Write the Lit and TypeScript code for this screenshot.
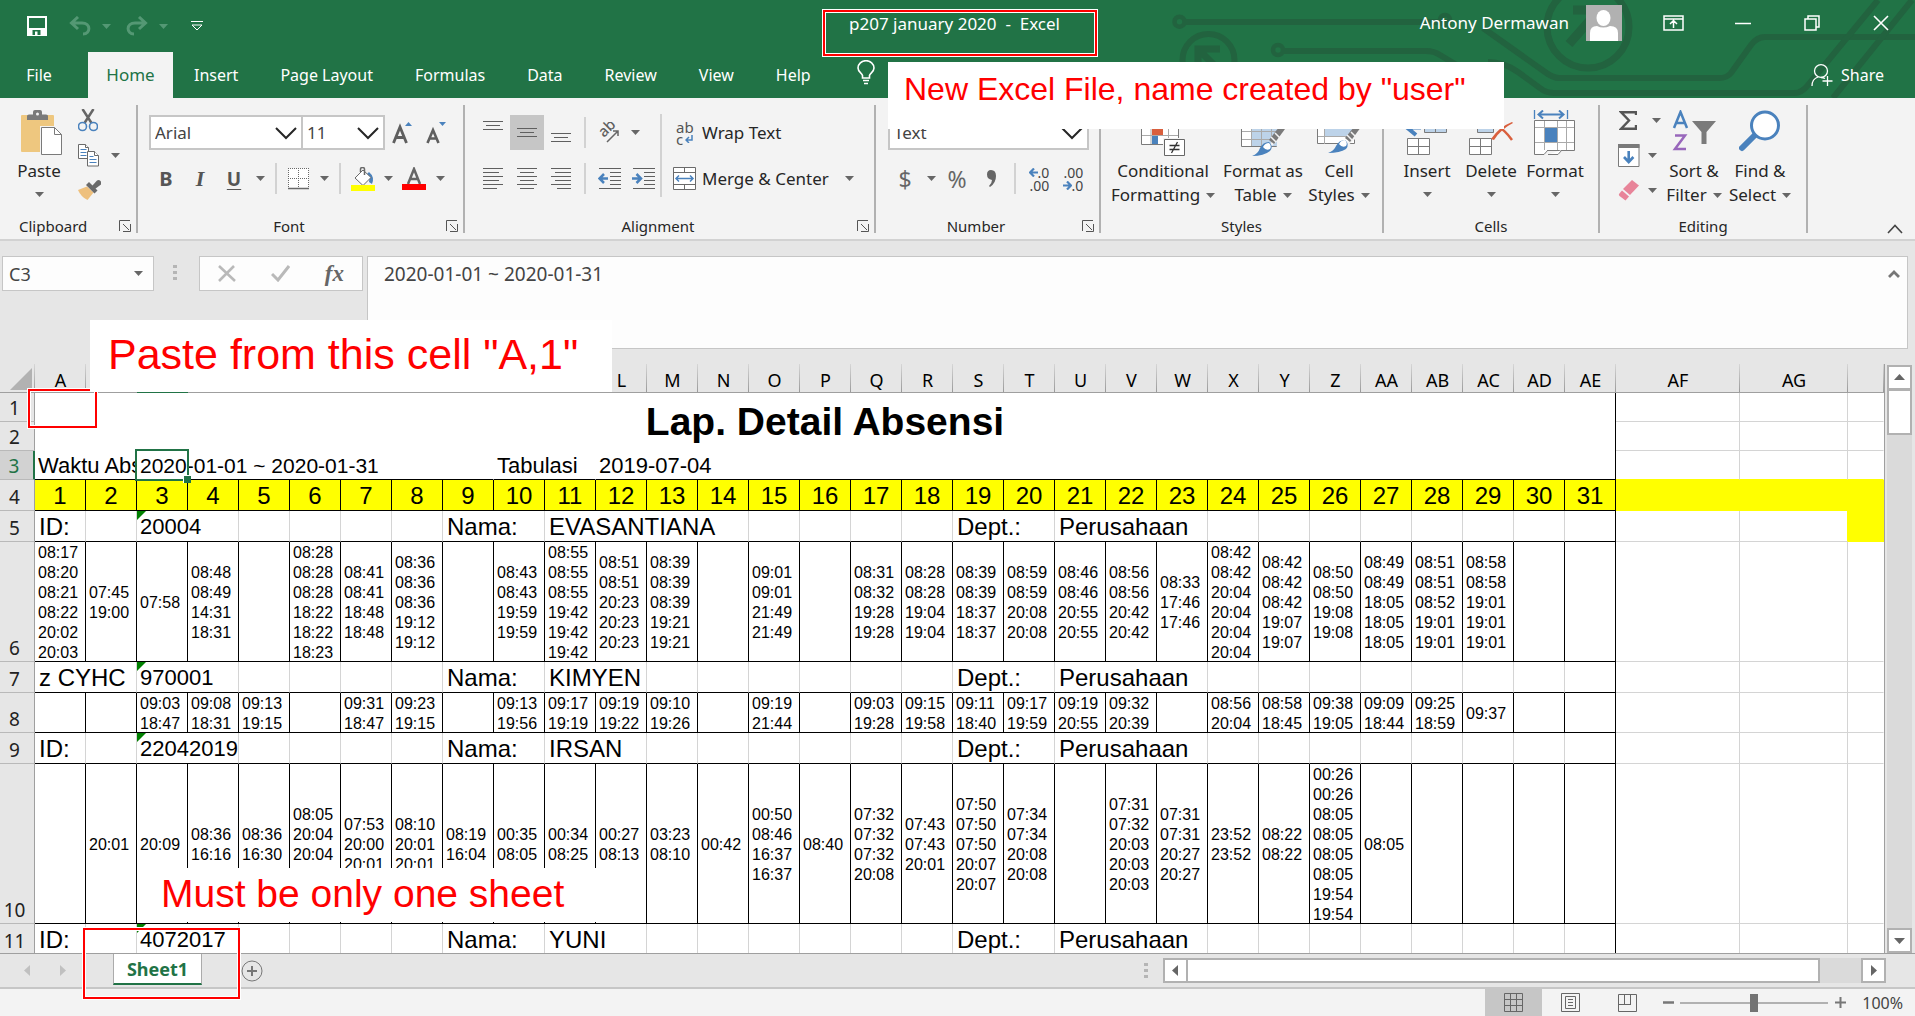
import { LitElement, html, css, svg, nothing, TemplateResult } from "lit";
import { customElement } from "lit/decorators.js";
import { classMap } from "lit/directives/class-map.js";

const caret = html`<svg class="caret" width="9" height="5" viewBox="0 0 9 5" aria-hidden="true"><path d="M0 0h9L4.500 5z" fill="#666"/></svg>`;
const chevron = html`<svg class="chev" width="22" height="13" viewBox="0 0 22 13" aria-hidden="true"><path d="M1 1l10 10L21 1" fill="none" stroke="#262626" stroke-width="2"/></svg>`;
const launcher = html`<svg width="12" height="12" viewBox="0 0 12 12" aria-hidden="true"><path d="M.5 11V.5H11M4 4l6 6M11.500 4v7.500H4" fill="none" stroke="#555"/></svg>`;

const lines = (xs: [number, number][]) => html`
  <svg width="20" height=${xs.length * 4 - 3} viewBox="0 0 20 ${xs.length * 4 - 3}" aria-hidden="true">
    ${xs.map(([a, b], i) => svg`<path d="M${a} ${i * 4 + 0.5}H${b}" stroke="#5f5f5f"/>`)}
  </svg>`;

const threeLines = lines([[0, 20], [3, 17], [0, 20]]);

const icons = {
  save: html`<svg width="20" height="20" viewBox="0 0 20 20"><path d="M1 1h18v18H1z" fill="none" stroke="#fff" stroke-width="2"/><path d="M1 12h18v7H1z" fill="#fff"/><path d="M5.500 14h8v5h-8z" fill="#217346"/><path d="M8 15.500h2.500V19H8z" fill="#fff"/></svg>`,
  undo: html`<svg width="22" height="20" viewBox="0 0 22 20" fill="none" stroke="#549874" stroke-width="3"><path d="M9 1L2.500 7 9 13M3 7h10c9 0 9 11 1 11"/></svg>`,
  redo: html`<svg width="22" height="20" viewBox="0 0 22 20" fill="none" stroke="#549874" stroke-width="3"><path d="M13 1l6.500 6L13 13M19 7H9C0 7 0 18 8 18"/></svg>`,
  custom: html`<svg width="12" height="10" viewBox="0 0 12 10" fill="none" stroke="#fff"><path d="M0 .5h12M1 4l5 5 5-5z"/></svg>`,
  display: html`<svg width="21" height="16" viewBox="0 0 21 16" fill="none" stroke="#fff" stroke-width="1.500"><path d="M1 1h19v14H1zM1 4h19M10.500 13V6M7 9l3.500-3.500L14 9"/></svg>`,
  minimize: html`<svg width="16" height="16" viewBox="0 0 16 16"><path d="M0 8.500h16" stroke="#fff" stroke-width="1.500"/></svg>`,
  restore: html`<svg width="16" height="16" viewBox="0 0 16 16" fill="none" stroke="#fff" stroke-width="1.500"><path d="M1 4h11v11H1zM4 4V1h11v11h-3"/></svg>`,
  close: html`<svg width="16" height="16" viewBox="0 0 16 16"><path d="M1 1l14 14M15 1L1 15" stroke="#fff" stroke-width="1.600"/></svg>`,
  bulb: html`<svg width="18" height="25" viewBox="0 0 18 25" fill="none" stroke="#fff" stroke-width="1.600"><path d="M5.500 18v-2.500C5 13 1 12 1 8a8 7.300 0 0 1 16 0c0 4-4 5-4.500 7.500V18zM6 20.500h6M7 23.500h4"/></svg>`,
  share: html`<svg width="22" height="23" viewBox="0 0 22 23" fill="none" stroke="#fff" stroke-width="1.300"><ellipse cx="10" cy="7" rx="6.500" ry="6.300"/><path d="M1 22c0-5 3-8 6-9M10 13.500c2 0 3 .5 4 1M16.500 12v10M11.500 17h10"/></svg>`,
  paste: html`<svg width="42" height="46" viewBox="0 0 42 46"><rect x="0" y="5" width="33" height="37" rx="1" fill="#eec77f"/><path d="M6 10V6q0-1.500 2-1.500h4V2q0-2 2-2h5q2 0 2 2v2.500h4q2 0 2 1.500v4z" fill="#7a7a7a"/><circle cx="16.500" cy="4" r="1.500" fill="#f3f3f3"/><path d="M19 16h15l8 8v22H19z" fill="#f3f3f3"/><path d="M20.500 17.500h13l7 7V44.500h-20z" fill="#fff" stroke="#7a7a7a"/><path d="M33.500 17.500v7h7" fill="none" stroke="#7a7a7a"/></svg>`,
  cut: html`<svg width="20" height="23" viewBox="0 0 20 23"><path d="M4.500 0l9 14M15.500 0l-9 14" stroke="#666" stroke-width="2.500"/><circle cx="4.500" cy="17.500" r="4" fill="#f3f3f3" stroke="#4a82bd" stroke-width="1.600"/><circle cx="15.500" cy="17.500" r="4" fill="#f3f3f3" stroke="#4a82bd" stroke-width="1.600"/></svg>`,
  copy: html`<svg width="21" height="23" viewBox="0 0 21 23" fill="#fff" stroke="#6a6a6a"><path d="M.5.5h7l3 3v11H.5z"/><path d="M7.500.5v3h3" /><path d="M2.500 5.500h6M2.500 8.500h6M2.500 11.500h6" stroke="#4a82bd"/><path d="M9.500 7.500h7l4 4v10.500h-11z"/><path d="M16.500 7.500v4h4"/><path d="M11.500 12.500h4M11.500 15.500h7M11.500 18.500h7" stroke="#4a82bd"/></svg>`,
  brush: html`<svg width="23" height="21" viewBox="0 0 23 21"><path d="M0 10l9-3.500 6.500 6L9.500 20Q3 17 0 10z" fill="#eec07d"/><path d="M8 5l3-3 8.500 8.500-3 3z" fill="#6a6a6a"/><path d="M14 6l5-5.500q2-1 3.500.5t.5 3.500L17 9z" fill="#6a6a6a"/></svg>`,
  border: html`<svg width="22" height="22" viewBox="0 0 22 22" fill="#fff" stroke="#6a6a6a"><path d="M.5.500h20.500v20H.5z" stroke="none"/><path d="M0 .5h21M0 10.500h21M.5 0v20M10.500 0v20M20.500 0v20" stroke-dasharray="1 1"/><path d="M0 20.500h21" stroke-width="1.500"/></svg>`,
  bucket: html`<svg width="24" height="24" viewBox="0 0 24 24"><path d="M18 5q6 5 3 12l-3-2q1-4-2-8z" fill="#4a82bd"/><path d="M4 11l8-8 8 7.500-8 8z" fill="#fff" stroke="#6a6a6a"/><path d="M9.500 5V2q0-1.500 2-1.500T13.500 2v6" fill="none" stroke="#6a6a6a" stroke-width="1.500"/><path d="M0 18h24v6H0z" fill="#ff0"/></svg>`,
  fontColor: html`<svg width="24" height="23" viewBox="0 0 24 23"><path d="M6 17L12 2l6 15M8 12h8" fill="none" stroke="#666" stroke-width="2.500"/><path d="M0 17h24v6H0z" fill="red"/></svg>`,
  grow: html`<svg width="20" height="22" viewBox="0 0 20 22"><path d="M1.500 21L8 5l6.500 16M4 15.500h8" fill="none" stroke="#5f5f5f" stroke-width="2.800"/><path d="M13 4l3.500-4L20 4z" fill="#4a82bd"/></svg>`,
  shrink: html`<svg width="20" height="22" viewBox="0 0 20 22"><path d="M1.500 21L7 8l5.500 13M3.500 16.500h7" fill="none" stroke="#5f5f5f" stroke-width="2.600"/><path d="M13 0h7l-3.500 4z" fill="#4a82bd"/></svg>`,
  orient: html`<svg width="22" height="22" viewBox="0 0 22 22"><text x="0" y="0" transform="translate(6 16) rotate(-45)" font-family="Noto Sans" font-size="15" font-weight="500" fill="#5f5f5f">ab</text><path d="M9 20L19.500 9.500M15 9h5v5" fill="none" stroke="#666" stroke-width="1.500"/></svg>`,
  outdent: html`<svg width="23" height="21" viewBox="0 0 23 21" fill="none" stroke="#5f5f5f"><path d="M1 .5h22M12 4.500h11M12 8.500h11M12 12.500h11M12 16.500h11M1 20.500h22"/><path d="M6 6l-4.500 4.500L6 15M2 10.500h8" stroke="#4a82bd" stroke-width="2.500"/></svg>`,
  indent: html`<svg width="23" height="21" viewBox="0 0 23 21" fill="none" stroke="#5f5f5f"><path d="M1 .5h22M12 4.500h11M12 8.500h11M12 12.500h11M12 16.500h11M1 20.500h22"/><path d="M4.500 6L9 10.500 4.500 15M0 10.500h8" stroke="#4a82bd" stroke-width="2.500"/></svg>`,
  merge: html`<svg width="23" height="23" viewBox="0 0 23 23"><path d="M.5.500h22v22H.5z" fill="#fff" stroke="#6a6a6a"/><path d="M0 5.500h23M0 17.500h23M11.500 0v5M11.500 18v5" stroke="#6a6a6a"/><path d="M3 11.500h17M6 8.500l-3 3 3 3M17 8.500l3 3-3 3" fill="none" stroke="#4a82bd" stroke-width="1.500"/></svg>`,
  wrapArrow: html`<svg width="8" height="8" viewBox="0 0 8 8"><path d="M7 0v5H1M4 2L1 5l3 3" fill="none" stroke="#4a82bd" stroke-width="1.500"/></svg>`,
  left: html`<svg width="9" height="9" viewBox="0 0 9 9"><path d="M9 4.500H1M5 .5l-4 4 4 4" fill="none" stroke="#4a82bd" stroke-width="2.200"/></svg>`,
  right: html`<svg width="9" height="9" viewBox="0 0 9 9"><path d="M0 4.500h8M4 .5l4 4-4 4" fill="none" stroke="#4a82bd" stroke-width="2.200"/></svg>`,
  cond: html`<svg width="44" height="46" viewBox="0 0 44 46"><path d="M.5 5.500h37v29H.5z" fill="#fff" stroke="#7a7a7a"/><path d="M10 6v28M27.500 6v28M1 15.500h36M1 25.500h36" stroke="#aaa" fill="none"/><path d="M11 6h16v9H11z" fill="#4a82bd"/><path d="M11 16h11v9H11z" fill="#d95f3d"/><path d="M11 26h6v8h-6z" fill="#4a82bd"/><path d="M22 28h22v18H22z" fill="#f3f3f3"/><path d="M23.500 29.500h20v16h-20z" fill="#fff" stroke="#666"/><path d="M28.500 35.500h10M28.500 39.500h10M36.500 32l-6 11" stroke="#333" stroke-width="1.300"/></svg>`,
  table: html`<svg width="44" height="46" viewBox="0 0 44 46"><path d="M.5 5.500h35v31H.5z" fill="#fff" stroke="#7a7a7a"/><path d="M11 15h25v21H11z" fill="#bdd3e9"/><path d="M10.500 6v30M20.500 6v30M30.500 6v30M1 14.500h34M1 21.500h34M1 29.500h34" stroke="#aaa"/><path d="M20 46L46 12v10z" fill="#f3f3f3"/><path d="M28 30l13-17 3-2v8L33 34z" fill="#7a7a7a"/><path d="M34 23l5 5M30 27l5 5" stroke="#f3f3f3" stroke-width="1.500"/><path d="M11 46q6-2 8-8 3-6 9-6 5 4 1 9-6 5-18 5z" fill="#4a82bd"/><path d="M22 37q2-4 6-4 3 3 1 6-4 2-7-2z" fill="#fff"/></svg>`,
  cell: html`<svg width="44" height="46" viewBox="0 0 44 46"><path d="M.5 5.500h37v28H.5z" fill="#fff" stroke="#7a7a7a"/><path d="M8 12h29v14H8z" fill="#bdd3e9"/><path d="M7.500 6v28M1 26.500h36M1 12.500h36" stroke="#aaa"/><path d="M19 46L46 12v10z" fill="#f3f3f3"/><path d="M28 28l13-16 3-2v7L33 32z" fill="#7a7a7a"/><path d="M34 22l5 5M30 25l5 5" stroke="#f3f3f3" stroke-width="1.500"/><path d="M11 43q6-2 8-7 3-6 9-6 5 4 1 9-6 4-18 4z" fill="#4a82bd"/><path d="M22 34q2-4 6-4 3 3 1 6-4 2-7-2z" fill="#fff"/></svg>`,
  insert: html`<svg width="44" height="46" viewBox="0 0 44 46"><path d="M11 9L2 17.500 11 25M2 17.500h14" fill="none" stroke="#4a82bd" stroke-width="4"/><path d="M19.500 10.500h22v12h-22z" fill="#bdd3e9" stroke="#7a7a7a"/><path d="M30.500 10v12M20 16.500h22" stroke="#7a7a7a"/><path d="M2.500 28.500h22v16h-22z" fill="#fff" stroke="#7a7a7a"/><path d="M13.500 28v16M2 36.500h22" stroke="#7a7a7a"/></svg>`,
  del: html`<svg width="44" height="46" viewBox="0 0 44 46"><path d="M8.500 10.500h16v12h-16z" fill="#bdd3e9" stroke="#7a7a7a"/><path d="M.5 28.500h22v16H.5z" fill="#fff" stroke="#7a7a7a"/><path d="M11.500 28v16M0 36.500h22" stroke="#7a7a7a"/><path d="M22 29q8-12 21-17l1 1Q32 19 25 30z" fill="#d95f3d"/><path d="M26 14q10 6 17 16" fill="none" stroke="#d95f3d" stroke-width="2.500"/></svg>`,
  format: html`<svg width="44" height="46" viewBox="0 0 44 46"><path d="M1.500 0v9M34.500 0v9" stroke="#4a82bd" stroke-width="1.300"/><path d="M6 4.500h24M10 .5l-4.500 4L10 8.500M26 .5l4.500 4-4.500 4" fill="none" stroke="#4a82bd" stroke-width="2"/><path d="M1.500 10.500h40v30h-40z" fill="#fff" stroke="#7a7a7a"/><path d="M11.500 11v29M24.500 11v29M33.500 11v29M2 17.500h39M2 32.500h39" stroke="#aaa"/><path d="M12 18h12v14H12z" fill="#4a82bd"/><path d="M1.500 40v4.500H11l4-4.500M15 44.500h10l4-4.500" fill="#fff" stroke="#7a7a7a"/></svg>`,
  sigma: html`<svg class="sigma" width="18" height="19" viewBox="0 0 18 19"><path d="M17 4V1.200H2L10 9.500 2 17.800h15V14" fill="none" stroke="#555" stroke-width="2.400"/></svg>`,
  fill: html`<svg width="22" height="23" viewBox="0 0 22 23"><path d="M.5.500h20.500v22H.5z" fill="#fff" stroke="#7a7a7a"/><path d="M0 0h21.500v4H0z" fill="#7a7a7a"/><path d="M10.700 7v11M6 13l4.700 5 4.700-5" fill="none" stroke="#4a82bd" stroke-width="2.600"/></svg>`,
  eraser: html`<svg width="22" height="21" viewBox="0 0 22 21"><path d="M14 0l7 5.500L12 15 5 9z" fill="#e88499"/><path d="M4 10.500l7 6-3.500 4-6-4.500q-1-1-.5-2z" fill="#e88499"/></svg>`,
  sort: html`<svg width="44" height="46" viewBox="0 0 44 46"><path d="M2 18L8.500 2 15 18M4.500 13h8" fill="none" stroke="#4a82bd" stroke-width="2.500"/><path d="M3 25.500h10L3 39h11" fill="none" stroke="#9867bb" stroke-width="2.500"/><path d="M20 11h24L34.500 22v12h-5V22z" fill="#7a7a7a"/></svg>`,
  find: html`<svg width="42" height="42" viewBox="0 0 42 42"><path d="M17 24L3 38" stroke="#4a82bd" stroke-width="6" stroke-linecap="round"/><circle cx="26" cy="15.500" r="13.500" fill="#fff" stroke="#4a82bd" stroke-width="3"/></svg>`,
  x: html`<svg width="18" height="17" viewBox="0 0 18 17"><path d="M1 1l16 15M16 1L1 16" stroke="#b9b9b9" stroke-width="2.600"/></svg>`,
  check: html`<svg width="19" height="17" viewBox="0 0 19 17"><path d="M1 9l6 6L18 1" fill="none" stroke="#b9b9b9" stroke-width="3"/></svg>`,
  normal: html`<svg width="19" height="19" viewBox="0 0 19 19" fill="none" stroke="#666"><path d="M.5.500h18v18H.5zM6.500 0v19M12.500 0v19M0 6.500h19M0 12.500h19"/></svg>`,
  page: html`<svg width="19" height="19" viewBox="0 0 19 19" fill="none" stroke="#666"><path d="M.5.500h18v18H.5zM4.500 3.500h10v12h-10zM7 6.500h5M7 9.500h5M7 12.500h5"/></svg>`,
  brk: html`<svg width="19" height="18" viewBox="0 0 19 18" fill="none" stroke="#666"><path d="M.5.500h18v17H.5zM6.500 0v10.500M12.500 0v10.500M0 10.500h13"/></svg>`,
};

const tri = (d: string) => html`<svg width="11" height="11" viewBox="0 0 11 11" aria-hidden="true"><path d=${d} fill="currentColor"/></svg>`;
const UP = "M0 8h11L5.500 2z", DOWN = "M0 3h11L5.500 9z", LEFT = "M8 0v11L2 5.500z", RIGHT = "M3 0v11L9 5.500z";

const COLS = [..."ABCDEFGHIJKLMNOPQRSTUVWXYZ", "AA", "AB", "AC", "AD", "AE", "AF", "AG", ""];

const times = (s: string) => s.split("|").map((c) => c.trim().replace(/ /g, "\n"));

const R6 = times("08:17 08:20 08:21 08:22 20:02 20:03|07:45 19:00|07:58|08:48 08:49 14:31 18:31||08:28 08:28 08:28 18:22 18:22 18:23|08:41 08:41 18:48 18:48|08:36 08:36 08:36 19:12 19:12||08:43 08:43 19:59 19:59|08:55 08:55 08:55 19:42 19:42 19:42|08:51 08:51 20:23 20:23 20:23|08:39 08:39 08:39 19:21 19:21||09:01 09:01 21:49 21:49||08:31 08:32 19:28 19:28|08:28 08:28 19:04 19:04|08:39 08:39 18:37 18:37|08:59 08:59 20:08 20:08|08:46 08:46 20:55 20:55|08:56 08:56 20:42 20:42|08:33 17:46 17:46|08:42 08:42 20:04 20:04 20:04 20:04|08:42 08:42 08:42 19:07 19:07|08:50 08:50 19:08 19:08|08:49 08:49 18:05 18:05 18:05|08:51 08:51 08:52 19:01 19:01|08:58 08:58 19:01 19:01 19:01||");
const R8 = times("||09:03 18:47|09:08 18:31|09:13 19:15||09:31 18:47|09:23 19:15||09:13 19:56|09:17 19:19|09:19 19:22|09:10 19:26||09:19 21:44||09:03 19:28|09:15 19:58|09:11 18:40|09:17 19:59|09:19 20:55|09:32 20:39||08:56 20:04|08:58 18:45|09:38 19:05|09:09 18:44|09:25 18:59|09:37||");
const R10 = times("|20:01|20:09|08:36 16:16|08:36 16:30|08:05 20:04 20:04 20:04|07:53 20:00 20:01|08:10 20:01 20:01|08:19 16:04|00:35 08:05|00:34 08:25|00:27 08:13|03:23 08:10|00:42|00:50 08:46 16:37 16:37|08:40|07:32 07:32 07:32 20:08|07:43 07:43 20:01|07:50 07:50 07:50 20:07 20:07|07:34 07:34 20:08 20:08||07:31 07:32 20:03 20:03 20:03|07:31 07:31 20:27 20:27|23:52 23:52|08:22 08:22|00:26 00:26 08:05 08:05 08:05 08:05 19:54 19:54|08:05||||");

@customElement("app-root")
export class AppRoot extends LitElement {
  static styles = css`
    :host { display: flex; flex-direction: column; position: relative; height: 100vh; overflow: hidden; background: #e6e6e6; color: #262626; font: 16px/24px "Noto Sans", "Open Sans", sans-serif; }
    * { box-sizing: border-box; }
    svg { display: block; flex: none; }
    button { font: inherit; color: inherit; background: none; border: 0; padding: 0; margin: 0; display: flex; align-items: center; justify-content: center; white-space: nowrap; }
    .head { position: relative; flex: none; background: #217346; color: #fff; }
    .circuit { position: absolute; right: 0; top: 0; }
    .title { position: relative; display: grid; grid-template-columns: 1fr auto 1fr; align-items: center; height: 46px; font-size: 17px; }
    .quick { display: flex; align-items: center; padding: 6px 0 0 27px; }
    .quick .caret path { fill: #549874; }
    .undo { margin-left: 22px; } .quick .caret { margin: 0 15px 0 11px; }
    .quick .custom { margin-left: 8px; }
    .docname { white-space: pre; padding-top: 2px; margin-right: 6px; }
    .who { display: flex; align-items: center; justify-content: flex-end; }
    .avatar { margin: 0 17px; }
    .who button { width: 69px; height: 46px; }
    .tabs { position: relative; display: flex; align-items: stretch; height: 46px; margin-top: 6px; }
    .tab { padding: 0 21px; color: #fff; }
    .tab.file { width: 88px; padding: 0 10px 0 0; }
    .tab.on { background: #f3f3f3; color: #217346; width: 85px; font-size: 17px; padding: 0; }
    .bulb { margin: 0 0 6px 25px; }
    .share { margin-left: auto; padding-right: 31px; gap: 8px; }
    .ribbon { flex: none; display: flex; background: #f3f3f3; border-bottom: 2px solid #d2d2d2; height: 143px; padding-top: 7px; font-size: 17px; }
    .group { display: flex; flex-direction: column; border-right: 2px solid #b1b1b1; margin-bottom: 6px; }
    .body { flex: 1; display: flex; }
    .foot { display: flex; height: 27px; align-items: center; font-size: 15px; margin-bottom: -6px; }
    .foot span { flex: 1; text-align: center; padding-right: 6px; }
    .foot button { width: 12px; margin-right: 5px; }
    .foot.plain span { padding-right: 0; }
    .clip .foot span { text-align: left; padding-left: 19px; }
    .clip { width: 138px; } .font { width: 327px; } .align { width: 411px; } .number { width: 225px; } .styles { width: 283px; } .cells { width: 216px; } .edit { width: 208px; }
    .big { flex-direction: column; justify-content: flex-start; padding-top: 5px; line-height: 24px; }
    .big .ico { height: 49px; }
    .big .caret { margin-top: 9px; }
    .big .line { display: flex; align-items: center; gap: 6px; }
    .big .line .caret { margin: 0; }
    .w-cond { width: 124px; } .w-style { width: 76px; } .w-paste { width: 78px; } .w-side { width: 86px; } .w-del { width: 42px; } .w-edit { width: 66px; }
    .w-paste .ico { padding-left: 6px; }
    .minis { display: flex; flex-direction: column; margin-top: -2px; }
    .mini { height: 35px; display: flex; align-items: center; gap: 12px; }
    .edit .minis { padding-left: 18px; } .edit .mini { gap: 8px; } .sigma { margin: 0 7px 0 1px; }
    .rows { display: flex; flex-direction: column; padding: 10px 0 0 11px; gap: 11px; }
    .row { display: flex; align-items: center; height: 35px; }
    .t { width: 34px; height: 35px; } .i { width: 32px; height: 35px; } .a { width: 18px; height: 35px; }
    .t.sel { background: #c6c6c6; }
    .sep { width: 2px; height: 31px; background: #d2d2d2; margin: 0 6px; }
    .tall { width: 2px; height: 83px; background: #d2d2d2; margin-top: 9px; }
    .combo { position: relative; height: 35px; border: 2px solid #c6c6c6; background: #fff; }
    .combo select { appearance: none; width: 100%; height: 100%; border: 0; background: none; padding: 0 4px; font: inherit; color: #444; }
    .combo .chev { position: absolute; right: 4px; top: 10px; pointer-events: none; }
    .c1 { width: 154px; } .c2 { width: 84px; margin-left: -2px; } .c3 { width: 201px; }
    .b { font-size: 20px; font-weight: 700; color: #555; }
    .it { font: italic 700 22px "Liberation Serif", serif; color: #555; }
    .u { font-size: 19px; font-weight: 700; color: #555; text-decoration: underline; text-underline-offset: 3px; text-decoration-thickness: 1px; }
    .sym { font-size: 23px; color: #666; }
    .number .rows { padding-left: 12px; }
    .dec { display: flex; flex-direction: column; align-items: flex-start; font-size: 14px; line-height: 13px; color: #444; }
    .dec span { display: flex; align-items: center; } .dec .end { align-self: flex-end; }
    .vtop { align-items: flex-start; padding-top: 6px; } .vbot { align-items: flex-end; padding-bottom: 8px; }
    .right { display: flex; flex-direction: column; gap: 11px; padding: 10px 0 0 11px; }
    .right button { height: 35px; justify-content: flex-start; }
    .lead { width: 23px; margin-right: 6px; }
    .wrapi { font-size: 15px; line-height: 12px; color: #555; text-align: left; padding-left: 3px; }
    .wrapi span { display: flex; align-items: center; gap: 2px; }
    .right .caret { margin-left: 16px; }
    .collapse { margin: auto 12px 5px auto; }
    .formula { flex: none; display: flex; align-items: flex-start; height: 123px; padding: 15px 7px 0 2px; font-size: 18px; color: #444; }
    .box { background: #fdfdfd; border: 1px solid #c6c6c6; height: 35px; display: flex; align-items: center; }
    .box input, .fx textarea { border: 0; background: none; font: inherit; color: inherit; padding: 0; min-width: 0; outline: 0; resize: none; }
    .name { width: 152px; padding: 0 10px 0 6px; } .name input { flex: 1; }
    .dots { width: 4px; height: 16px; background: repeating-linear-gradient(#b5b5b5 0 3px, transparent 3px 6px); }
    .formula .dots { margin: 9px 22px 0 19px; }
    .fns { width: 164px; justify-content: space-between; padding: 0 18px; margin-right: 4px; }
    .fn { font: italic 700 23px "Liberation Serif", serif; color: #666; }
    .fx { flex: 1; height: 93px; align-items: flex-start; padding: 4px 7px 0 16px; font-size: 19px; }
    .fx textarea { flex: 1; height: 82px; line-height: 26px; }
    .fx button { margin-top: 9px; }
    .sheet { flex: 1; min-height: 0; display: flex; border-bottom: 1px solid #9f9f9f; }
    .grid { flex: 1; min-width: 0; overflow: hidden; border-right: 1px solid #9f9f9f; background: linear-gradient(#e6e6e6 28px, #fff 28px); }
    table { width: 100%; table-layout: fixed; border-collapse: separate; border-spacing: 0; font: 24px/28px "Liberation Sans", Arial, sans-serif; color: #000; }
    .w0 { width: 35px; } .w1 { width: 51px; } .w2 { width: 124px; } .w3 { width: 108px; }
    th, td { padding: 0; border-right: 1px solid #d4d4d4; border-bottom: 1px solid #d4d4d4; }
    thead th { height: 29px; background: #e6e6e6 linear-gradient(#d6d6d6, #9a9a9a) right / 1px 100% no-repeat; border-right: 0; border-bottom: 1px solid #9f9f9f; font: 18px/20px "Noto Sans", sans-serif; vertical-align: bottom; padding-bottom: 2px; }
    thead th.cur { background-color: #d2d2d2; color: #217346; border-bottom: 2px solid #217346; }
    .corner svg { margin-left: 10px; }
    tbody th { background: #e6e6e6; border-right-color: #9f9f9f; border-bottom-color: #b9b9b9; font: 19px/22px "Noto Sans", sans-serif; vertical-align: bottom; padding: 0 5px 2px 0; color: #222; }
    tbody th.cur { background: #d2d2d2; color: #217346; border-right: 2px solid #217346; }
    .r29 { height: 29px; } .r31 { height: 31px; }
    .k { border-bottom-color: #000; } .kr { border-right-color: #000; }
    .y { background: #ff0; } td.yb { border-bottom-color: #ff0; } td.yr { border-right-color: #ff0; }
    .none { border-right-color: transparent; }
    .big-title { font-size: 39px; font-weight: 700; text-align: center; border-bottom: 0; }
    .txt { padding: 2px 0 0 4px; white-space: nowrap; position: relative; }
    .num { font-size: 22px; padding-left: 3px; } .sub { font-size: 21px; padding-left: 3px; } .mid { text-align: center; padding-top: 2px; }
    .txt, .mid { line-height: 26px; }
    .clipd { overflow: hidden; height: 26px; width: 98px; }
    .err::before { content: ""; position: absolute; left: 0; top: 0; border-top: 9px solid green; border-right: 9px solid transparent; }
    .cellsel { position: absolute; left: -2px; top: -2px; width: 54px; height: 32px; border: 2px solid #217346; }
    .cellsel::after { content: ""; position: absolute; right: -4px; bottom: -4px; width: 7px; height: 7px; background: #217346; border: solid #fff; border-width: 1px 0 0 1px; }
    .tm { display: flex; align-items: center; overflow: hidden; white-space: pre; font-size: 16px; line-height: 20px; padding: 2px 0 0 3px; }
    .h120 { height: 119px; } .h40 { height: 39px; } .h160 { height: 159px; }
    .vs { width: 30px; padding: 1px 3px 0 2px; display: flex; flex-direction: column; color: #666; }
    .sb { width: 25px; height: 25px; border: 2px solid #b1b1b1; background: #fff; flex: none; }
    .vt { height: 46px; margin-top: -1px; border: 2px solid #b1b1b1; background: #fff; } .track { flex: 1; background: #dadada; }
    .bar { flex: none; height: 33px; display: flex; align-items: center; color: #666; }
    .nav { width: 113px; display: flex; gap: 24px; padding-left: 22px; color: #c0c0c0; }
    .stab { align-self: stretch; margin-bottom: 2px; width: 89px; background: #fff; color: #217346; font-weight: 700; font-size: 18px; border: solid #ababab; border-width: 0 1px; border-bottom: 2px solid #217346; }
    .plus { margin-left: 39px; }
    .hs { margin: 0 29px 0 auto; width: 742px; display: flex; align-items: center; }
    .hs .dots { margin-right: 15px; }
    .ht { flex: 1; height: 25px; margin-left: -2px; border: 2px solid #b1b1b1; background: #fff; } .hgap { width: 41px; height: 25px; background: #dadada; }
    .status { flex: none; height: 29px; border-top: 2px solid #c6c6c6; background: #f3f3f3; display: flex; align-items: center; justify-content: flex-end; padding-right: 12px; color: #444; }
    .view { width: 57px; height: 27px; } .view.sel { background: #c6c6c6; }
    .zb { width: 11px; margin: 0 6px 0 7px; }
    input[type="range"] { appearance: none; width: 148px; height: 18px; margin: 0; background: linear-gradient(#b1b1b1, #b1b1b1) center / 100% 2px no-repeat; }
    input[type="range"]::-webkit-slider-thumb { appearance: none; width: 8px; height: 18px; background: #737373; border: 0; border-radius: 0; }
    .pct { margin-left: 10px; }
    .note { position: absolute; background: #fff; color: red; font-family: "Liberation Sans", Arial, sans-serif; white-space: nowrap; }
    .n1 { left: 888px; top: 62px; width: 616px; height: 67px; padding-left: 16px; font-size: 32px; line-height: 54px; }
    .n2 { left: 90px; top: 320px; width: 522px; height: 72px; padding-left: 18px; font-size: 43px; line-height: 69px; }
    .n3 { left: 137px; top: 868px; width: 503px; height: 54px; padding-left: 24px; font-size: 39px; line-height: 52px; }
    .mark { position: absolute; border: 2px solid red; box-shadow: 0 0 0 1px #fff, inset 0 0 0 1px #fff; pointer-events: none; }
    .m1 { left: 823px; top: 10px; width: 274px; height: 46px; }
    .m2 { left: 28px; top: 389px; width: 69px; height: 39px; }
    .m3 { left: 83px; top: 928px; width: 157px; height: 71px; }
  `;

  private tool(label: string, icon: unknown, cls = "t") {
    return html`<button class=${cls} aria-label=${label}>${icon}</button>`;
  }
  private drop(label: string) {
    return html`<button class="a" aria-label="${label} options">${caret}</button>`;
  }
  private foot(label: string, more = true) {
    return html`<div class="foot ${more ? "" : "plain"}"><span>${label}</span>${more ? html`<button aria-label="${label} settings">${launcher}</button>` : nothing}</div>`;
  }
  private big(icon: unknown, l1: string, l2: string, width: string) {
    return html`<button class="big ${width}"><div class="ico">${icon}</div><div>${l1}</div>${l2 ? html`<div class="line">${l2} ${caret}</div>` : caret}</button>`;
  }

  private circuit() {
    return html`<svg class="circuit" width="750" height="98" viewBox="0 0 750 98" fill="none" stroke="#22633f" stroke-width="6" aria-hidden="true">
      <circle cx="14.500" cy="21.700" r="5" stroke-width="4.500"/><path d="M20 22h266M318 28l62 44q8 6 14 6h160q8 0 12-5l20-28q6-8 14-8h150"/>
      <circle cx="280" cy="20" r="5" stroke-width="4.500"/>
      <circle cx="113" cy="50" r="5" stroke-width="4.500"/><path d="M119 51h142q8 0 14 4l40 24M323 62q16 0 30 10l22 16q6 5 14 5h240q8 0 14-8L713 0M668 98L747 0"/>
      <circle cx="423" cy="27" r="41" stroke-width="7"/><path d="M408 10h26v26M434 10l-30 34" stroke-width="9"/>
      <circle cx="43.500" cy="60" r="26"/><path d="M33 74V49h22M34 50l24 24" stroke-width="7"/>
    </svg>`;
  }

  private outer(row: number) {
    const yel = row === 4;
    return [0, 1, 2].map((i) => html`<td class=${classMap({
      y: yel || (row === 5 && i === 2),
      yr: yel || (row === 5 && i === 1),
      yb: row === 3 || yel || (row === 5 && i === 2),
      none: i === 2,
    })}></td>`);
  }

  private idRow(n: number, a: string, id: string, name: string, span: number) {
    const e = (k: number) => Array.from({ length: k }, () => html`<td class="k"></td>`);
    const wide = a.length > 4;
    return html`<tr class="r31"><th scope="row">${n}</th>
      <td class="k txt" colspan=${wide ? 2 : 1}>${a}</td>${wide ? nothing : e(1)}
      <td class="k txt num err" colspan="2">${id}</td>${e(4)}
      <td class="k txt" colspan="2">Nama:</td>
      <td class="k txt" colspan=${span}>${name}</td>${e(8 - span)}
      <td class="k txt" colspan="2">Dept.:</td>
      <td class="k txt" colspan="3">Perusahaan</td>${e(7)}<td class="k kr"></td>
      ${this.outer(n)}</tr>`;
  }

  private timeRow(n: number, data: string[], h: string) {
    return html`<tr><th scope="row">${n}</th>${data.map((d) => html`<td class="k kr"><div class="tm ${h}">${d}</div></td>`)}${this.outer(n)}</tr>`;
  }

  private table(): TemplateResult {
    return html`<table>
      <colgroup><col class="w0">${COLS.slice(0, 31).map(() => html`<col class="w1">`)}<col class="w2"><col class="w3"><col></colgroup>
      <thead><tr><th class="corner"><svg width="22" height="22" viewBox="0 0 22 22"><path d="M22 0v22H0z" fill="#b2b2b2"/></svg></th>
        ${COLS.map((c) => html`<th scope="col" class=${c === "C" ? "cur" : ""}>${c}</th>`)}</tr></thead>
      <tbody>
        <tr class="r29"><th scope="row">1</th><td class="big-title kr" colspan="31" rowspan="2">Lap. Detail Absensi</td>${this.outer(1)}</tr>
        <tr class="r29"><th scope="row">2</th>${this.outer(2)}</tr>
        <tr class="r29"><th scope="row" class="cur">3</th>
          <td class="k none txt num" colspan="2"><div class="clipd">Waktu Absensi</div></td>
          <td class="k none txt sub" colspan="7">2020-01-01 ~ 2020-01-31<div class="cellsel"></div></td>
          <td class="k none txt num" colspan="2">Tabulasi</td>
          <td class="k kr txt num" colspan="20">2019-07-04</td>${this.outer(3)}</tr>
        <tr class="r31"><th scope="row">4</th>${Array.from({ length: 31 }, (_, i) => html`<td class="y k kr mid">${i + 1}</td>`)}${this.outer(4)}</tr>
        ${this.idRow(5, "ID:", "20004", "EVASANTIANA", 4)}
        ${this.timeRow(6, R6, "h120")}
        ${this.idRow(7, "z CYHC", "970001", "KIMYEN", 2)}
        ${this.timeRow(8, R8, "h40")}
        ${this.idRow(9, "ID:", "22042019", "IRSAN", 2)}
        ${this.timeRow(10, R10, "h160")}
        ${this.idRow(11, "ID:", "4072017", "YUNI", 2)}
      </tbody></table>`;
  }

  render() {
    return html`
      <header class="head">
        ${this.circuit()}
        <div class="title">
          <div class="quick">
            <button aria-label="Save">${icons.save}</button>
            <button class="undo" aria-label="Undo">${icons.undo}${caret}</button>
            <button aria-label="Redo">${icons.redo}${caret}</button>
            <button class="custom" aria-label="Customize toolbar">${icons.custom}</button>
          </div>
          <div class="docname">p207 january 2020  -  Excel</div>
          <div class="who"><span>Antony Dermawan</span>
            <svg class="avatar" width="36" height="36" viewBox="0 0 36 36"><path d="M0 0h36v36H0z" fill="#b1b1b1"/><ellipse cx="17.500" cy="13" rx="7" ry="8" fill="#fff"/><path d="M4 36V28q0-7 7-7 6 3 13 0 8 0 8 7v8z" fill="#fff"/></svg>
            <button aria-label="Ribbon display">${icons.display}</button><button aria-label="Minimize">${icons.minimize}</button>
            <button aria-label="Restore">${icons.restore}</button><button aria-label="Close">${icons.close}</button>
          </div>
        </div>
        <nav class="tabs">
          <button class="tab file">File</button><button class="tab on">Home</button>
          ${["Insert", "Page Layout", "Formulas", "Data", "Review", "View", "Help"].map((t) => html`<button class="tab">${t}</button>`)}
          <button class="bulb" aria-label="Tell me">${icons.bulb}</button>
          <button class="share">${icons.share}<span>Share</span></button>
        </nav>
      </header>

      <section class="ribbon">
        <div class="group clip"><div class="body">
            ${this.big(icons.paste, "Paste", "", "w-paste")}
            <div class="minis">
              <div class="mini">${this.tool("Cut", icons.cut, "")}</div>
              <div class="mini">${this.tool("Copy", icons.copy, "")}${this.tool("Copy options", caret, "")}</div>
              <div class="mini">${this.tool("Format painter", icons.brush, "")}</div>
            </div></div>${this.foot("Clipboard")}</div>

        <div class="group font"><div class="body"><div class="rows">
            <div class="row">
              <div class="combo c1"><select aria-label="Font"><option>Arial</option></select>${chevron}</div>
              <div class="combo c2"><select aria-label="Font size"><option>11</option></select>${chevron}</div>
              ${this.tool("Grow font", icons.grow)}${this.tool("Shrink font", icons.shrink)}
            </div>
            <div class="row">
              ${this.tool("Bold", "B", "t b")}${this.tool("Italic", "I", "t it")}${this.tool("Underline", "U", "t u")}${this.drop("Underline")}
              <div class="sep"></div>${this.tool("Borders", icons.border, "i")}${this.drop("Borders")}
              <div class="sep"></div>${this.tool("Fill color", icons.bucket, "i")}${this.drop("Fill")}${this.tool("Font color", icons.fontColor, "t")}${this.drop("Font color")}
            </div></div></div>${this.foot("Font")}</div>

        <div class="group align"><div class="body"><div class="rows">
            <div class="row">
              ${this.tool("Top align", threeLines, "t vtop")}
              ${this.tool("Middle align", threeLines, "t sel")}
              ${this.tool("Bottom align", threeLines, "t vbot")}
              <div class="sep"></div>${this.tool("Orientation", icons.orient, "t")}${this.drop("Orientation")}
            </div>
            <div class="row">
              ${this.tool("Align left", lines([[0, 20], [0, 16], [0, 20], [0, 16], [0, 20], [0, 14]]))}
              ${this.tool("Center", lines([[0, 20], [3, 17], [0, 20], [3, 17], [0, 20], [3, 17]]))}
              ${this.tool("Align right", lines([[0, 20], [4, 20], [0, 20], [4, 20], [0, 20], [6, 20]]))}
              <div class="sep"></div>${this.tool("Decrease indent", icons.outdent)}${this.tool("Increase indent", icons.indent)}
            </div></div>
            <div class="tall"></div>
            <div class="right">
              <button><div class="lead wrapi"><span>ab</span><span>c${icons.wrapArrow}</span></div>Wrap Text</button>
              <button><div class="lead">${icons.merge}</div>Merge &amp; Center ${caret}</button>
            </div></div>${this.foot("Alignment")}</div>

        <div class="group number"><div class="body"><div class="rows">
            <div class="row"><div class="combo c3"><select aria-label="Number format"><option>Text</option></select>${chevron}</div></div>
            <div class="row">${this.tool("Currency", "$", "t sym")}${this.drop("Currency")}${this.tool("Percent", "%", "t sym")}${this.tool("Comma", html`<svg width="9" height="17" viewBox="0 0 9 17"><path d="M4 0q5 0 5 6 0 7-6 11l-1-1q3-3 3-6Q0 9 0 4.500 0 0 4 0z" fill="#666"/></svg>`)}
              <div class="sep"></div>
              ${this.tool("Increase decimal", html`<span class="dec"><span>${icons.left}.0</span><span class="end">.00</span></span>`, "t")}
              ${this.tool("Decrease decimal", html`<span class="dec"><span class="end">.00</span><span>${icons.right}.0</span></span>`, "t")}
            </div></div></div>${this.foot("Number")}</div>

        <div class="group styles"><div class="body">
            ${this.big(icons.cond, "Conditional", "Formatting", "w-cond")}${this.big(icons.table, "Format as", "Table", "w-style")}${this.big(icons.cell, "Cell", "Styles", "w-style")}
          </div>${this.foot("Styles", false)}</div>

        <div class="group cells"><div class="body">
            ${this.big(icons.insert, "Insert", "", "w-side")}${this.big(icons.del, "Delete", "", "w-del")}${this.big(icons.format, "Format", "", "w-side")}
          </div>${this.foot("Cells", false)}</div>

        <div class="group edit"><div class="body">
            <div class="minis">
              <div class="mini">${this.tool("AutoSum", icons.sigma, "")}${caret}</div>
              <div class="mini">${this.tool("Fill", icons.fill, "")}${caret}</div>
              <div class="mini">${this.tool("Clear", icons.eraser, "")}${caret}</div>
            </div>
            ${this.big(icons.sort, "Sort &", "Filter", "w-edit")}${this.big(icons.find, "Find &", "Select", "w-edit")}
          </div>${this.foot("Editing", false)}</div>
        <button class="collapse" aria-label="Collapse ribbon"><svg width="16" height="10" viewBox="0 0 16 10"><path d="M1 9l7-7.500L15 9" fill="none" stroke="#444" stroke-width="1.600"/></svg></button>
      </section>

      <section class="formula">
        <div class="box name"><input aria-label="Name box" value="C3">${caret}</div>
        <div class="dots"></div>
        <div class="box fns"><button aria-label="Cancel">${icons.x}</button><button aria-label="Enter">${icons.check}</button><button class="fn" aria-label="Insert function">fx</button></div>
        <div class="box fx"><textarea aria-label="Formula bar" .value=${"2020-01-01 ~ 2020-01-31"}></textarea><button aria-label="Collapse formula bar"><svg width="12" height="8" viewBox="0 0 12 8"><path d="M1 7l5-5 5 5" fill="none" stroke="#777" stroke-width="2.800"/></svg></button></div>
      </section>

      <main class="sheet">
        <div class="grid">${this.table()}</div>
        <div class="vs"><button class="sb" aria-label="Scroll up">${tri(UP)}</button><div class="vt"></div><div class="track"></div><button class="sb" aria-label="Scroll down">${tri(DOWN)}</button></div>
      </main>

      <div class="bar">
        <div class="nav">${tri(LEFT)}${tri(RIGHT)}</div>
        <button class="stab">Sheet1</button>
        <button class="plus" aria-label="New sheet"><svg width="22" height="22" viewBox="0 0 22 22" fill="none" stroke="#777"><circle cx="11" cy="11" r="10"/><path d="M11 6v10M6 11h10" stroke-width="2"/></svg></button>
        <div class="hs"><div class="dots"></div><button class="sb" aria-label="Scroll left">${tri(LEFT)}</button><div class="ht"></div><div class="hgap"></div><button class="sb" aria-label="Scroll right">${tri(RIGHT)}</button></div>
      </div>

      <footer class="status">
        <button class="view sel" aria-label="Normal view">${icons.normal}</button><button class="view" aria-label="Page layout view">${icons.page}</button><button class="view" aria-label="Page break view">${icons.brk}</button>
        <button class="zb" aria-label="Zoom out"><svg width="11" height="11" viewBox="0 0 11 11"><path d="M0 5.500h11" stroke="#777" stroke-width="2.500"/></svg></button>
        <input type="range" aria-label="Zoom" min="0" max="200" value="100">
        <button class="zb" aria-label="Zoom in"><svg width="11" height="11" viewBox="0 0 11 11"><path d="M0 5.500h11M5.500 0v11" stroke="#777" stroke-width="2"/></svg></button>
        <span class="pct">100%</span>
      </footer>

      <div class="mark m1"></div><div class="mark m2"></div>
      <div class="note n1">New Excel File, name created by "user"</div>
      <div class="note n2">Paste from this cell "A,1"</div>
      <div class="note n3">Must be only one sheet</div>
      <div class="mark m3"></div>
    `;
  }
}
